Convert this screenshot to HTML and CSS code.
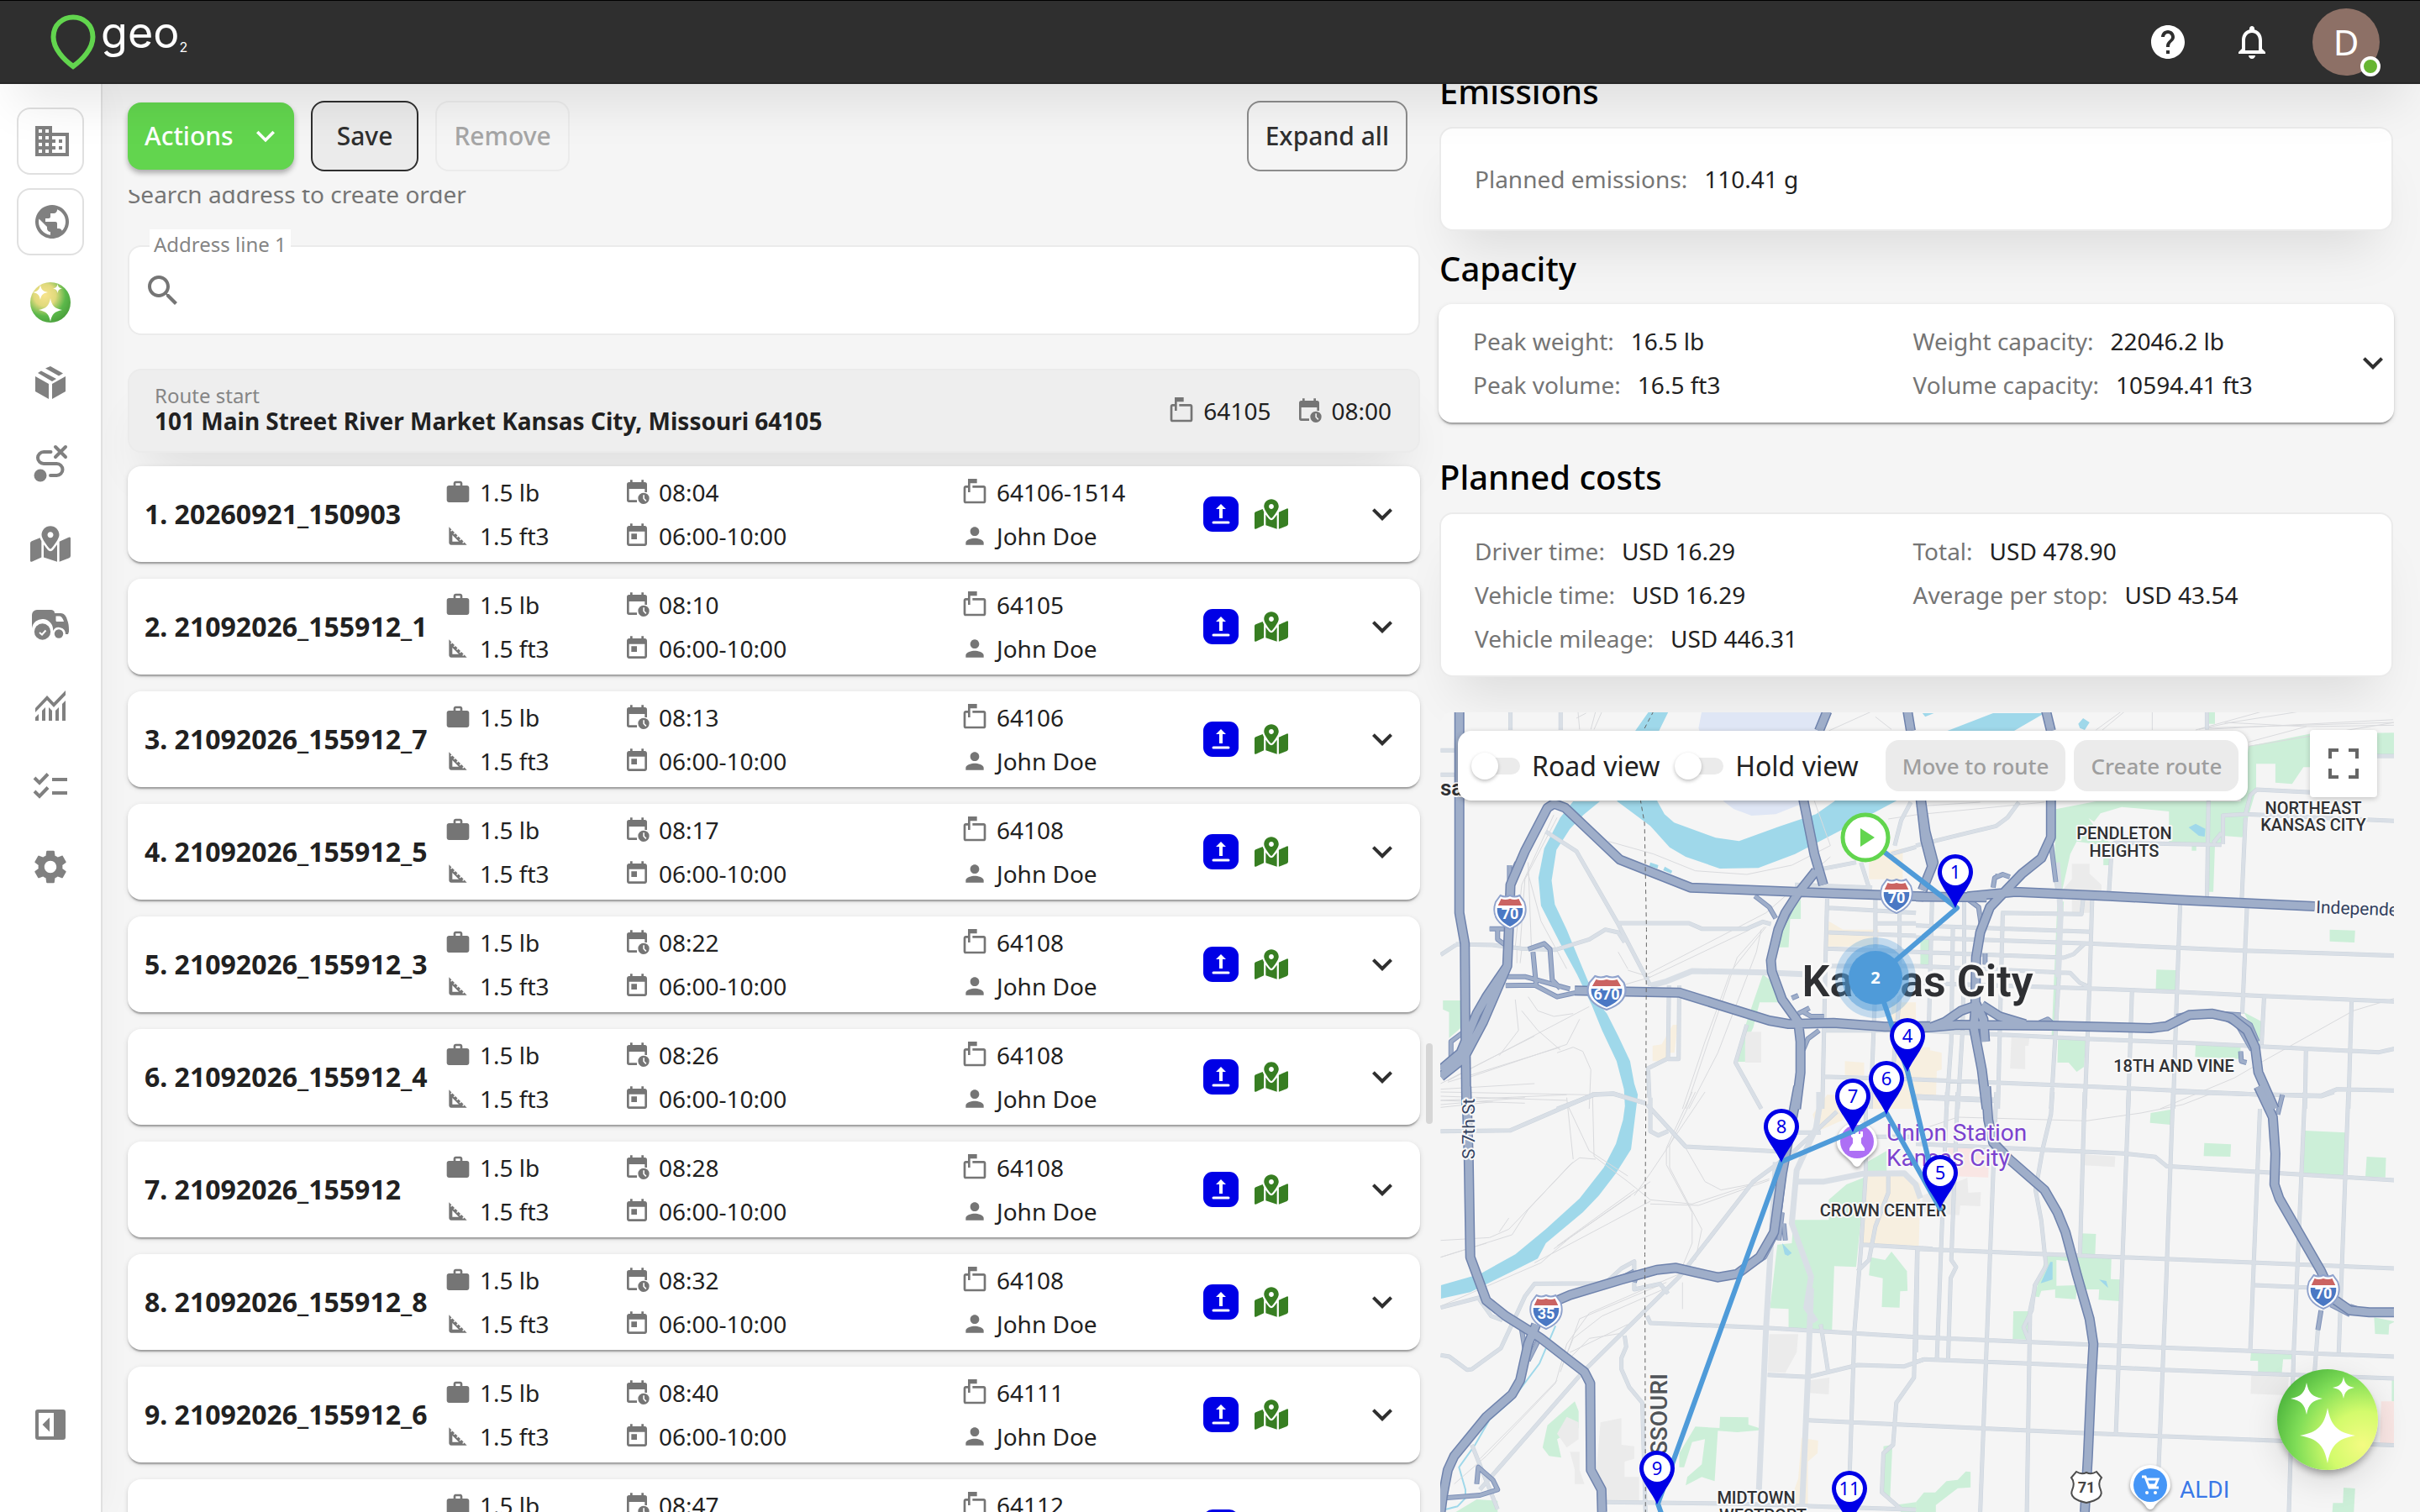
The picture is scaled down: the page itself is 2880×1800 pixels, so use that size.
FILE: index.html
```html
<!DOCTYPE html>
<html lang="en">
<head>
<meta charset="utf-8">
<meta name="viewport" content="width=device-width, initial-scale=1">
<title>geo2 – Route</title>
<link rel="stylesheet" href="styles.css">
</head>
<body>
<svg class="sprite" aria-hidden="true">
  <symbol id="i-chevron" viewBox="0 0 24 24"><path d="M16.59 8.59 12 13.17 7.41 8.59 6 10l6 6 6-6z"/></symbol>
  <symbol id="i-case" viewBox="0 0 24 24"><path d="M20 6h-4V4c0-1.11-.89-2-2-2h-4c-1.11 0-2 .89-2 2v2H4c-1.11 0-1.99.89-1.99 2L2 19c0 1.11.89 2 2 2h16c1.11 0 2-.89 2-2V8c0-1.11-.89-2-2-2zm-6 0h-4V4h4v2z"/></symbol>
  <symbol id="i-square" viewBox="0 0 24 24"><path d="M17.66 17.66l-1.06 1.06-.71-.71 1.06-1.06-1.94-1.94-1.06 1.06-.71-.71 1.06-1.06-1.94-1.94-1.06 1.06-.71-.71 1.06-1.06L9.7 9.7l-1.06 1.06-.71-.71 1.06-1.06-1.94-1.94-1.06 1.06-.71-.71 1.06-1.06L4 4v14c0 1.1.9 2 2 2h14l-2.34-2.34zM7 17v-5.76L12.76 17H7z"/></symbol>
  <symbol id="i-eta" viewBox="0 0 24 24"><path d="M19 3h-1V1h-2v2H8V1H6v2H5a2 2 0 0 0-2 2v14a2 2 0 0 0 2 2h7v-2H5V9h14v3h2V5a2 2 0 0 0-2-2z"/><path fill-rule="evenodd" d="M18 12.5a5 5 0 1 0 0 10 5 5 0 0 0 0-10zm-.5 2h1.2v2.9l1.9 1.9-.9.9-2.2-2.3z"/></symbol>
  <symbol id="i-window" viewBox="0 0 24 24"><path d="M19 3h-1V1h-2v2H8V1H6v2H5c-1.11 0-1.99.9-1.99 2L3 19c0 1.1.89 2 2 2h14c1.1 0 2-.9 2-2V5c0-1.1-.9-2-2-2zm0 16H5V8h14v11zM7 10h5v5H7z"/></symbol>
  <symbol id="i-mailbox" viewBox="0 0 24 24"><path d="M20 6H10v2h10v12H4V8h2v4h2V4h6V0H6v6H4c-1.1 0-2 .9-2 2v12c0 1.1.9 2 2 2h16c1.1 0 2-.9 2-2V8c0-1.1-.9-2-2-2z"/></symbol>
  <symbol id="i-person" viewBox="0 0 24 24"><path d="M12 12c2.21 0 4-1.79 4-4s-1.79-4-4-4-4 1.79-4 4 1.79 4 4 4zm0 2c-2.67 0-8 1.34-8 4v2h16v-2c0-2.66-5.33-4-8-4z"/></symbol>
  <symbol id="i-pickup" viewBox="0 0 42 42"><rect width="42" height="42" rx="11" fill="#0000e6"/><path d="M21 9l6 6h-4v11h-4V15h-4z" fill="#fff"/><path d="M12 31h18" stroke="#fff" stroke-width="3" stroke-linecap="round"/></symbol>
  <symbol id="i-map" viewBox="0 0 576 512"><path d="M288 0c-69.59 0-126 56.41-126 126 0 56.26 82.35 158.8 113.9 196.02 6.39 7.54 17.82 7.54 24.2 0C331.65 284.8 414 182.26 414 126 414 56.41 357.59 0 288 0zm0 168c-23.2 0-42-18.8-42-42s18.8-42 42-42 42 18.8 42 42-18.8 42-42 42zM20.12 215.95A32.006 32.006 0 0 0 0 245.66v250.32c0 11.32 11.43 19.06 21.94 14.86L160 448V214.92c-8.84-15.98-16.07-31.54-21.25-46.42L20.12 215.95zM288 359.67c-14.07 0-27.38-6.18-36.51-16.96-19.66-23.2-40.57-49.62-59.49-76.72v182l192 64V266c-18.92 27.09-39.82 53.52-59.49 76.72-9.13 10.77-22.44 16.95-36.51 16.95zm266.06-198.51L416 224v288l139.88-55.95A31.996 31.996 0 0 0 576 426.34V176.02c0-11.32-11.43-19.06-21.94-14.86z"/></symbol>
  <symbol id="i-star" viewBox="-32 -32 64 64"><path d="M0-32C4-11 11-4 32 0 11 4 4 11 0 32-4 11-11 4-32 0-11-4-4-11 0-32z" fill="#fff"/></symbol>
  <symbol id="shield" viewBox="0 0 42 44" preserveAspectRatio="none"><path d="M9 2q6 3 12 0 6 3 12 0l6 8c6 17-5 27-18 32C8 37-3 27 3 10z" fill="#fff" stroke="#8fa2cc" stroke-width="2"/><path d="M5 17h32c1 12-8 18-16 22C13 35 4 29 5 17z" fill="#4a78c4"/><path d="M10 6q5 2 11 0 6 2 11 0l4 8H6z" fill="#cb6462"/></symbol>
  <symbol id="pin" viewBox="0 0 42 64"><path d="M21 0a21 21 0 0 1 21 21c0 14-15 28-21 43C15 49 0 35 0 21A21 21 0 0 1 21 0z" fill="#0000e6"/><circle cx="21" cy="21" r="16" fill="#fff"/></symbol>
</svg>

<header class="topbar">
  <a class="logo" href="#" aria-label="geo2 home">
    <svg class="logo-pin" viewBox="0 0 54 66"><path d="M27 3.500C39 3.500 50.500 12 50.500 27 50.500 41 38 54 27 62 16 54 3.500 41 3.500 27 3.500 12 15 3.500 27 3.500z" fill="none" stroke="#62d54e" stroke-width="6"/></svg>
    <span class="logo-text">geo<small>2</small></span>
  </a>
  <nav class="topbar-tools" aria-label="Account">
    <button class="icon-btn" aria-label="Help"><svg viewBox="0 0 24 24"><path d="M12 2C6.480 2 2 6.480 2 12s4.480 10 10 10 10-4.480 10-10S17.520 2 12 2zm1 17h-2v-2h2v2zm2.070-7.750l-.9.92C13.450 12.900 13 13.500 13 15h-2v-.5c0-1.100.450-2.100 1.170-2.830l1.240-1.260c.370-.360.590-.860.590-1.410 0-1.100-.9-2-2-2s-2 .9-2 2H8c0-2.210 1.790-4 4-4s4 1.790 4 4c0 .88-.36 1.680-.93 2.250z"/></svg></button>
    <button class="icon-btn" aria-label="Notifications"><svg viewBox="0 0 24 24"><path d="M12 22c1.100 0 2-.9 2-2h-4c0 1.100.890 2 2 2zm6-6v-5c0-3.070-1.640-5.640-4.500-6.320V4c0-.83-.67-1.500-1.500-1.500s-1.500.67-1.500 1.500v.68C7.630 5.360 6 7.920 6 11v5l-2 2v1h16v-1l-2-2zm-2 1H8v-6c0-2.480 1.510-4.500 4-4.500s4 2.020 4 4.500v6z"/></svg></button>
    <button class="avatar" aria-label="Account D, online">D<span class="status"></span></button>
  </nav>
</header>

<div class="shell">
  <nav class="sidebar" aria-label="Main">
    <a class="side-link boxed" href="#" aria-label="Company"><svg viewBox="0 0 24 24"><path d="M12 7V3H2v18h20V7H12zM6 19H4v-2h2v2zm0-4H4v-2h2v2zm0-4H4V9h2v2zm0-4H4V5h2v2zm4 12H8v-2h2v2zm0-4H8v-2h2v2zm0-4H8V9h2v2zm0-4H8V5h2v2zm10 12h-8v-2h2v-2h-2v-2h2v-2h-2V9h8v10zm-2-8h-2v2h2v-2zm0 4h-2v2h2v-2z"/></svg></a>
    <a class="side-link boxed" href="#" aria-label="Region"><svg viewBox="0 0 24 24"><path d="M12 2C6.480 2 2 6.480 2 12s4.480 10 10 10 10-4.480 10-10S17.520 2 12 2zm-1 17.930c-3.950-.49-7-3.850-7-7.930 0-.62.080-1.210.210-1.790L9 15v1c0 1.100.9 2 2 2v1.930zm6.900-2.540c-.26-.81-1-1.390-1.900-1.390h-1v-3c0-.55-.45-1-1-1H8v-2h2c.55 0 1-.45 1-1V7h2c1.100 0 2-.9 2-2v-.41c2.930 1.190 5 4.060 5 7.410 0 2.080-.8 3.970-2.100 5.390z"/></svg></a>
    <a class="side-link" href="#" aria-label="Assistant"><svg viewBox="0 0 48 48"><defs><radialGradient id="ai-small" cx=".36" cy=".32" r=".72"><stop offset="0" stop-color="#f8e48e"/><stop offset=".38" stop-color="#e0d97c"/><stop offset=".72" stop-color="#5bb84a"/><stop offset="1" stop-color="#4ba03c"/></radialGradient></defs><circle cx="24" cy="24" r="24" fill="url(#ai-small)"/><use href="#i-star" x="10" y="19" width="28" height="28"/><use href="#i-star" x="3" y="3" width="18" height="18"/><use href="#i-star" x="27" y="2" width="11" height="11"/></svg></a>
    <a class="side-link" href="#" aria-label="Orders"><svg viewBox="0 0 48 48"><path d="M6 16l16 9v18L6 34zM42 16l-16 9v18l16-9zM9 12l4-2.500L31 19l-5 3zM18 6.500L24 4l15 8.500-5 3z"/></svg></a>
    <a class="side-link" href="#" aria-label="Unplanned routes"><svg viewBox="0 0 48 48"><g fill="none" stroke="#808080" stroke-width="4" stroke-linecap="round"><path d="M24.500 10H16a7 7 0 0 0 0 14h15.500a7 7 0 0 1 0 14H24M30 4l12 12M42 4L30 16"/></g><circle cx="12" cy="38" r="7.500"/></svg></a>
    <a class="side-link" href="#" aria-label="Map"><svg viewBox="0 0 48 48"><use href="#i-map" x="0" y="2" width="48" height="43"/></svg></a>
    <a class="side-link" href="#" aria-label="Fleet"><svg viewBox="0 0 48 48"><path d="M2 28V12a6 6 0 0 1 6-6h16c3 0 5 1 5 4h6c4 0 6 1 8 5l2 6c1 4 1 7 1 11l-1 3h-3a8 8 0 0 0-15-4A12 12 0 0 0 2 28z"/><path d="M30.500 13.500H35c2 0 4 3 5 6.500h-8c-1 0-1.500-.5-1.500-1.500z" fill="#fff"/><circle cx="14.500" cy="32" r="9.700"/><circle cx="34" cy="34.500" r="5.200"/><path d="M11 33l3 2.500 4.500-5" fill="none" stroke="#fff" stroke-width="2"/></svg></a>
    <a class="side-link" href="#" aria-label="Analytics"><svg viewBox="0 0 48 48"><path d="M6 27l14-15 8 8.500L42 6v5.500L28 26l-8-8.500L6 32zM6 38l4-4v8H6zM14 30l4-4v16h-4zM22 26l4 4v12h-4zM30 30l4-4v16h-4zM38 22l4-4v24h-4z"/></svg></a>
    <a class="side-link" href="#" aria-label="Tasks"><svg viewBox="0 0 48 48"><path d="M5 14l6 6L21 9.500M5 30l6 6 10-10.500M26 16h18M26 32h18" fill="none" stroke="#808080" stroke-width="4"/></svg></a>
    <a class="side-link" href="#" aria-label="Settings"><svg viewBox="0 0 24 24"><path d="M19.140 12.940c.040-.3.060-.61.060-.94 0-.32-.02-.64-.07-.94l2.030-1.580c.180-.14.230-.41.120-.61l-1.920-3.320c-.12-.22-.37-.29-.59-.22l-2.390.96c-.5-.38-1.030-.7-1.620-.94l-.36-2.540c-.04-.24-.24-.41-.48-.41h-3.840c-.24 0-.43.170-.47.410l-.36 2.540c-.59.240-1.130.570-1.620.940l-2.390-.96c-.22-.08-.47 0-.59.220L2.740 8.870c-.12.210-.08.470.120.610l2.030 1.580c-.05.3-.09.630-.09.940s.020.640.070.940l-2.030 1.580c-.18.140-.23.410-.12.610l1.920 3.320c.120.220.370.290.590.220l2.390-.96c.5.380 1.030.7 1.620.940l.36 2.540c.050.240.240.410.480.410h3.840c.24 0 .44-.17.470-.41l.36-2.540c.59-.24 1.130-.56 1.620-.94l2.390.96c.22.080.470 0 .59-.22l1.920-3.320c.12-.22.070-.47-.12-.61l-2.010-1.580zM12 15.600c-1.980 0-3.600-1.620-3.600-3.600s1.620-3.600 3.600-3.600 3.600 1.620 3.600 3.600-1.620 3.600-3.600 3.600z"/></svg></a>
    <button class="side-link collapse" aria-label="Expand sidebar"><svg viewBox="0 0 48 48"><path fill-rule="evenodd" d="M9 6h30a3 3 0 0 1 3 3v30a3 3 0 0 1-3 3H9a3 3 0 0 1-3-3V9a3 3 0 0 1 3-3zm1 4v28h18V10z"/><path d="M23 15.500v17L14.500 24z"/></svg></button>
  </nav>

  <main class="content">
    <section class="orders">
      <div class="toolbar">
        <button class="btn btn-primary">Actions<svg viewBox="0 0 24 24"><use href="#i-chevron"/></svg></button>
        <button class="btn btn-dark">Save</button>
        <button class="btn btn-muted" disabled>Remove</button>
        <button class="btn btn-expand">Expand all</button>
      </div>
      <div class="order-scroll">
        <p class="hint">Search address to create order</p>
        <div class="field">
          <label for="address">Address line 1</label>
          <svg viewBox="0 0 24 24"><path d="M15.500 14h-.79l-.28-.27C15.410 12.590 16 11.110 16 9.500 16 5.910 13.090 3 9.500 3S3 5.910 3 9.500 5.910 16 9.500 16c1.610 0 3.090-.59 4.230-1.570l.27.280v.79l5 4.990L20.490 19l-4.990-5zm-6 0C7.010 14 5 11.990 5 9.500S7.010 5 9.500 5 14 7.010 14 9.500 11.990 14 9.500 14z"/></svg>
          <input id="address" type="text">
        </div>
        <div class="route-start">
          <div class="start-place"><span>Route start</span><strong>101 Main Street River Market Kansas City, Missouri 64105</strong></div>
          <span class="fact"><svg><use href="#i-mailbox"/></svg>64105</span>
          <span class="fact"><svg><use href="#i-eta"/></svg>08:00</span>
        </div>
        <ol class="stops" id="stops"></ol>
      </div>
    </section>

    <section class="details">
      <h2>Emissions</h2>
      <div class="panel panel-tall"><dl><div><dt>Planned emissions:</dt><dd>110.41 g</dd></div></dl></div>
      <h2>Capacity</h2>
      <div class="panel panel-raised">
        <dl>
          <div><dt>Peak weight:</dt><dd>16.5 lb</dd></div><div><dt>Weight capacity:</dt><dd>22046.2 lb</dd></div>
          <div><dt>Peak volume:</dt><dd>16.5 ft3</dd></div><div><dt>Volume capacity:</dt><dd>10594.41 ft3</dd></div>
        </dl>
        <button class="expand" aria-label="Expand capacity"><svg><use href="#i-chevron"/></svg></button>
      </div>
      <h2>Planned costs</h2>
      <div class="panel">
        <dl>
          <div><dt>Driver time:</dt><dd>USD 16.29</dd></div><div><dt>Total:</dt><dd>USD 478.90</dd></div>
          <div><dt>Vehicle time:</dt><dd>USD 16.29</dd></div><div><dt>Average per stop:</dt><dd>USD 43.54</dd></div>
          <div><dt>Vehicle mileage:</dt><dd>USD 446.31</dd></div>
        </dl>
      </div>

      <div class="map">
        <svg class="map-canvas" viewBox="1714 848 1136 952" preserveAspectRatio="xMinYMin slice" role="img" aria-label="Route map of Kansas City">
          <defs>
            <g id="local-roads">
              <path d="M38 160H90M38 247H90M255 20V87M411 20V87M38 890L85 855M85 852L200 855 290 868 395 872 500 835 550 800 590 810 610 845M365 450L460 520 590 780 690 1000M590 777H810L850 797H990L1040 772 1065 780M748 1000L745 1260 683 1295 687 1400M780 1000L778 1262H745M1240 690L1235 900 1225 1440M1390 690V1000L1375 1440M1465 700V1040L1445 1300M1245 722L1516 740M1245 810L1516 822M1240 868L1516 880M1390 778H1516M1225 930H1516M1225 1160H1440M1225 1325L1516 1335M990 1140L955 1275 1035 1440M400 1440L515 1390 575 1387 675 1420M1195 590L1330 560M1440 530L1516 505M1450 500L1470 410 1500 345M1345 560L1370 650M1140 640L1380 650"/>
              <path transform="translate(1516 0)" d="M905 20V85M910 340L905 700M1025 400L1013 700M955 495V392L1025 388 1490 412M1025 388L1040 320 1060 300 1230 310M1430 180H1490M925 490L950 455M600 675L610 495 620 490 950 497M0 500L160 455 250 430 285 400 320 345M265 740L515 745 520 690M0 785L545 808M0 828L540 850 810 865 1020 875 1490 893M0 880L460 900 490 888 525 850M0 930L480 955 510 990 540 1005M0 990L540 1010 810 1022 1080 1037 1490 1057M548 695L540 1000 525 1440M822 705L810 1080 800 1440M1030 710L1015 1100M672 1020L660 1440M1083 1040L1075 1210M1355 1055L1345 1440M0 1160L530 1190 860 1205 1440 1238 1490 1225M1213 1230L1210 1440M0 1335L530 1360 1050 1388 1260 1393 1310 1370 1490 1375M150 700V920L145 1160 130 1440M115 790L110 1200 95 1440M270 740L255 1440M50 700L40 1160M0 1400L255 1412M435 620L450 720 445 960 420 1440"/>
              <path transform="translate(0 1380)" d="M38 140L255 137 515 8 575 5 675 40M690 20V140L715 155 745 140M680 45L800 195 1085 212M1105 240L1010 320 780 660 480 1000 160 1420M1270 70L1110 240M38 770L155 735 195 800 230 815M38 940L65 945 120 992 135 990 225 915 300 730 330 685 550 683 600 630 640 605V705L720 685 745 720M680 800L690 825 1050 842 1516 875M1430 300V360L1390 480 1370 600 1335 640M1360 0V290L1345 560 1325 850 1310 1360M1350 545L1568 560M1220 830L1243 1000M1055 1010L1180 1018 1335 975 1480 980 1540 955M1180 1172L1516 1190M1520 560L1510 1020 1455 1110 1445 1260 1415 1290 1410 1430 1470 1490M550 1465L950 1470 1516 1492M610 870L615 910 600 950V990L625 1055 665 1110 675 1500M135 1260L215 1490M1130 145H1220M1390 160H1516"/>
              <path transform="translate(1516 1380)" d="M0 15L255 28M0 185L650 220 745 232 780 265 1060 285 1490 315M0 560L640 590 1490 630M0 875L555 903 1040 925 1490 945M0 965L25 955 350 970 770 992 1050 1005 1490 1023M0 1190L520 1218 1490 1262M97 0L65 960M130 0L110 600 125 625 108 665 100 960M250 0L200 1500M425 0L420 80 395 200 372 350 390 460 400 570M370 700L355 780 345 1500M400 570L405 620 370 690 360 780 335 840 350 885M525 0L510 590M662 0L622 1220M800 0L778 690 755 1340M1070 60L1040 920M1210 0L1175 930 1160 1500M1345 0L1315 930M1055 690L1220 698M1250 850L1240 1000M805 0L1260 15 1300 0M5 560L0 930"/>
            </g>
            <g id="highways">
              <path d="M96 20V740L113 850 115 1170 118 1450M38 1300L100 1240 150 1100 180 1040 245 930 250 800 255 640 300 520 370 365 390 350 425 365 595 550 815 650 1240 670 1540 682M38 1325L110 1260 170 1130 245 930M455 1018L780 1025 1060 1125 1120 1137 1260 1133 1420 1147 1560 1145M1165 330L1200 530 1228 640M1240 20L1215 90M1490 20L1500 90M1530 330L1545 480 1565 570M1205 590L1150 670 1110 740 1088 800 1065 910 1068 950 1100 1050 1150 1130 1157 1200V1310L1143 1440"/>
              <path transform="translate(1516 0)" d="M0 682L220 685M160 682L310 665 600 680 840 695 1240 717M405 20L420 90M420 330V470L390 545 330 600 230 720 200 810 187 900 185 1060 210 1120 215 1200M15 330L30 450 55 560 20 660M20 1150L50 1148 130 1140 420 1143 730 1152 780 1145 850 1105 920 1100 980 1115 1030 1160 1055 1220 1065 1310 1115 1440M50 1148L90 1130 140 1090 185 1072M205 1070L260 1110 340 1138M185 1080L180 1150 205 1300 220 1440"/>
              <path transform="translate(0 1380)" d="M118 -20L125 240 130 590 180 745 240 800 310 850 350 880 485 1000 503 1040 505 1350 538 1420 540 1500M340 800L400 745 440 725 600 670 710 635 770 628 900 662 960 650 1030 590 1075 500 1100 290 1150 -20M335 830L310 900 285 1030 260 1080 180 1160 80 1300 60 1350 45 1440 38 1500"/>
              <path transform="translate(1516 1380)" d="M218 -20L225 100 240 180 290 240 400 350 440 430 465 500 500 650 540 810 552 900 545 1040 535 1300 525 1500M1065 -20L1110 90 1118 220 1115 330 1130 380 1190 500 1260 640 1300 740 1350 780 1410 787 1500 787"/>
            </g>
            <g id="ramps">
              <path d="M190 797H245M215 800V835L245 860M310 870L360 850 378 870 385 980 410 1010M325 880L335 1000M245 968H300L440 1012M240 1000L330 998 400 1040 460 1025M70 1260V1200L110 1165M1015 680L1060 720 1080 760M1215 1160L1180 1190 1165 1230M1130 1045L1150 1035M1150 1100L1185 1080M1160 1090L1190 1110H1230M252 570V620L275 560M1065 900L1095 800 1130 720"/>
              <path transform="translate(1516 0)" d="M240 650L245 615 270 603 292 612M255 600V610M160 690L195 720 205 800M200 810L210 760M418 470L435 630M215 885V925M1010 1235L1012 1270 1028 1275M1000 1110L1040 1140 1062 1200M950 1110L1000 1140 1045 1230M215 1080L210 1200M810 1110L880 1095 1010 1105M380 1135L410 1120 430 1140"/>
              <path transform="translate(0 1380)" d="M50 1450L160 1440 215 1420 200 1385 155 1340 150 1400M140 1210L105 1270M290 850L300 920M345 880L310 960M590 670L640 640M650 640L640 680M1100 430L1090 530M1110 530L1105 470M960 650L1045 590 1085 500 1105 300"/>
              <path transform="translate(1516 1380)" d="M1140 10L1125 80M1260 780L1250 850M1290 760L1350 795M1350 765L1400 785"/>
            </g>
          </defs>

          <g class="surface" transform="translate(1700 840) scale(.382653 .333333)">
            <g class="park">
              <path d="M45 1053H102V1150L64 1187V1095L45 1085zM1158 692V762H1125L1120 863H1090L1095 800 1135 720zM1040 960L1085 1000 1090 1060H1030L1010 1150 985 1210V1272H958L975 1180 1010 1060zM1530 830H1558V925H1530z"/>
              <path transform="translate(1516 0)" d="M1035 145L1230 100 1490 97V175L1230 180V220H1205L1170 280 1118 275V208H1058V300L1015 470 955 465 950 490 930 500 925 665H905V495H560L500 485 480 530 455 660H440L430 620 435 370 560 342H1010zM905 20H930V65H905zM1287 800L1366 803 1364 846 1287 842zM748 943L810 945 808 1018 746 1015zM870 1210L1010 1218 1008 1262 868 1255zM1020 1095L1078 1130 1070 1210zM442 1188L528 1192 523 1290 500 1308 475 1275H440zM440 700H460L440 1180H422zM583 530H603V570H583zM858 500H872V518H858z"/>
              <path transform="translate(0 1380)" d="M1135 457H1345L1330 625 1262 622 1255 852 1120 845V775L1062 772 1085 545 1130 540zM1245 385L1300 330 1355 305 1350 457H1245zM1375 590L1420 600 1440 570 1488 640 1490 710 1467 712 1465 770 1410 768 1413 665 1370 655zM370 1190L455 1105 467 1140V1200L400 1240 413 1306 375 1300 355 1270zM907 1160L995 1162V1188L1028 1200V1208L960 1215 900 1210 890 1390 850 1375 800 1405 805 1375 850 1330 860 1240 820 1250 795 1340H780V1290L830 1195 905 1200zM85 1500L150 1455 215 1460V1500zM1415 1265L1443 1260 1435 1465 1415 1440zM1450 1475L1516 1465V1500H1470zM1365 250L1425 210V285H1365z"/>
              <path transform="translate(1516 1380)" d="M730 75L795 62 793 117 728 110zM897 182L980 187 978 231 895 229zM1210 138L1336 145 1332 298 1205 293zM1402 231L1462 235 1460 305 1398 302zM514 505L560 507 557 590 608 595 606 668 638 670 635 747 568 742 570 705H500L497 740 433 735V705L390 710 383 733 368 730 405 585H510zM303 783H360L355 885 301 882zM1042 930L1175 935 1172 955H1142L1138 1003 1064 1000V960H1040zM0 1465L25 1430H60L95 1390 130 1385 155 1355 170 1357V1412L130 1415 62 1475V1500H0zM1330 1413L1366 1416 1362 1500H1295L1297 1468H1328zM1425 805L1490 820 1472 830 1470 866 1428 864zM1480 1030H1490V1105H1480z"/>
            </g>
            <path class="land" d="M2053 402L2070 415 2090 385 2156 362 2303 378V487H2116L2070 430zM1953 1980L2006 1985 2016 2070 1953 2072z"/>
            <path class="shops" d="M1370 530L1475 510V620H1370zM1245 770L1290 800H1400V860H1240zM1440 1060H1516V1130H1440zM1440 1220H1560V1400H1450zM760 1140H775L765 1240H740V1270H697V1215L725 1210zM1295 1270L1355 1275V1320H1295zM1240 1390H1290V1480L1210 1520 1195 1460zM1536 1225L1596 1240V1300L1581 1305 1578 1410H1516V1340H1546zM1360 1680H1500L1530 1710 1525 1930 1350 1920zM1160 2615L1212 2625 1210 2670 1180 2700V2860H1120L1150 2760zM1370 1380H1516V1440H1370z"/>
            <path class="industry" d="M985 1165H1035V1275H985zM2001 565H2056V600L2093 640V660H1971L2001 620zM2001 680H2065V740H2001zM1813 1185L1869 1187 1866 1215H1856V1298L1809 1296zM1060 2245H1150L1145 2310 1110 2383 1055 2380zM535 2560L600 2545V2640L640 2645V2690L610 2700V2755H655V2845H550V2800L520 2760zM1185 2410L1247 2400 1245 2460 1183 2455zM440 2665L470 2665V2730L485 2780H455V2730zM400 2600L430 2540 467 2560V2620L430 2650zM2041 1603L2136 1610 2134 1648 2039 1642zM2559 2390L2676 2395 2671 2463 2557 2458zM1536 1750L1676 1687 1679 1740 1718 1737 1716 1788 1654 1785 1651 1820 1536 1810z"/>
            <path class="hospital" d="M1616 1580H1744L1741 1685 1616 1680zM2963 2485H3006V2637L2959 2635z"/>
            <path class="airport" d="M850 20H1250L1215 90 1180 342 1080 388 1005 393 950 370 918 342 840 80z"/>
            <path class="river" d="M686 20H747L700 130 690 230 712 342 734 388 764 418 893 472 966 484 1092 431 1205 388 1262 342 1400 180 1621 87 1756 27H1916L1826 87 1600 240 1452 342 1300 435 1140 530 1026 580 906 582 800 540 750 506 690 430 587 342 580 180 645 87zM450 342H533L482 390 440 440 398 515 383 625 393 710 430 800 480 940 520 1050 555 1100 590 1180 627 1270 640 1350 651 1390 650 1400 630 1585 583 1670 530 1750 480 1810 365 1920 340 1975 270 2015 130 2095 39 2118V2070L160 2030 270 1960 365 1870 470 1760 545 1650 583 1565 605 1480 611 1430 608 1370 585 1270 540 1160 508 1070 462 960 410 850 350 715 342 615 360 510 410 400zM690 560L715 570 712 582 687 573zM735 575L758 590 755 600 730 588zM2364 435L2386 422 2416 440 2414 468 2396 465zM2021 65L2036 45 2056 60 2041 87 2026 80zM1536 27H1572L1545 40zM1934 1987H1941V2050L1904 2063zM2086 2050L2108 2055 2114 2080zM1100 1920L1130 1955 1118 1965 1108 1960z"/>
            <path class="creek" d="M395 2215L345 2350 260 2480 190 2550 145 2640 95 2720 115 2800V2830L90 2860 40 2875"/>

            <g class="rail">
              <path d="M560 485L700 530 830 590 990 603 1130 570 1250 500 1200 340M680 960L1050 740 1250 540M680 975L1000 800M620 945L690 970 600 1000M270 860L290 640 390 390M285 860L300 620 400 400M310 560L320 860M310 600L350 770 430 940M275 860V920M290 870L285 920M60 1340L500 1075M38 1380L500 1390M38 1395L430 1410M38 1410L300 1420M38 1350L330 1180M38 1370L330 1350M60 1345L410 1220M290 1090L340 1160 410 1230M470 1120L430 1210 120 1330M270 1050L280 1160 220 1250M310 1040L340 1090 390 1110 450 1100M500 1440L505 1300 480 1235 450 1220 400 1240M1050 790L940 950 860 1200 790 1440M1045 790L960 900 870 1200 800 1440M1035 800L1020 880 900 1240 810 1440M465 20L470 85M520 20L505 85M490 27L460 45M540 20L515 85M1245 90L1380 20M1390 40L1440 85M1430 405L1516 390M590 880L620 940"/>
              <path transform="translate(1516 0)" d="M0 360L200 345M0 390L400 345M560 87L640 20M580 87L650 20M735 20V87M870 87L1080 20M900 85L1490 50M900 80L1490 60M960 60L1215 75 1490 70M1035 130L1215 75M1035 145L1490 60M880 85L980 60 1200 20M760 1440L990 1330 1080 1270 1360 1090 1490 1045"/>
              <path transform="translate(0 1380)" d="M38 30L430 10M38 45L300 20M38 55L200 35M430 20L450 240M510 0L515 230 620 320 690 385 820 400 1060 310M430 40L500 210 620 300M450 250L250 490 190 520 38 530M520 240L470 235 440 260 310 420 260 510 38 590M250 450L220 500M820 0L740 200V260L820 430V540L780 650M830 0L750 190V270L850 490 830 600M860 0L690 290 640 370M800 200L860 320 910 350 1000 330M690 320L440 520 350 610 38 765M630 370L390 560M640 350L400 550M690 390L560 470 330 610M690 400L840 405 1060 315M780 650L500 790 430 900 395 1040 180 1300 80 1400M740 680L470 810 410 1000M740 700L540 800 450 880 415 980M620 830L440 930M610 860L500 880 440 950M38 590L180 540M790 680V775M400 1030L290 1160 160 1310"/>
              <path transform="translate(1516 1380)" d="M0 140L130 90 530 103 700 75 830 45 920 5"/>
            </g>
            <use href="#local-roads" class="road-edge"/>
            <use href="#local-roads" class="road-fill"/>
            <path class="avenue" d="M690 1000L740 985 820 948 1050 953 1225 962M1215 1380V1440L1205 1510 1145 1660 1130 1850 1190 2040 1175 2150 1205 2200M1080 1630L1050 2220 1040 2480 1027 2820M1140 1700L1230 1700 1350 1672 1480 1670 1515 1710 1530 1760M1190 2080L1180 2400 1162 2860M1955 560L1966 740 1958 970"/>
            <use href="#ramps" class="ramp-edge"/>
            <use href="#ramps" class="ramp-fill"/>
            <use href="#highways" class="hw-edge"/>
            <use href="#highways" class="hw-fill"/>
            <path class="state-line" d="M700 20L668 90 660 342 672 420 678 800 676 1440 673 1960 675 2880"/>
          </g>

          <g class="area-label">
            <text x="2753" y="969">NORTHEAST</text><text x="2753" y="989">KANSAS CITY</text>
            <text x="2528" y="999">PENDLETON</text><text x="2528" y="1020">HEIGHTS</text>
            <text x="2587" y="1276">18TH AND VINE</text>
            <text x="2241" y="1448">CROWN CENTER</text>
            <text x="2090" y="1790">MIDTOWN</text><text x="2098" y="1811">WESTPORT</text>
          </g>
          <text class="city-label" x="2282" y="1186">Kansas City</text>
          <text class="town-label" x="1714" y="947">sa</text>
          <text class="road-label" transform="translate(1755 1380) rotate(-90)">S 7th St</text>
          <text class="road-label" transform="translate(2756 1087) rotate(2)">Independence</text>
          <text class="state-label" transform="translate(1984 1635) rotate(-90)">MISSOURI</text>
          <g class="place-label">
            <text x="2245" y="1358">Union Station</text><text x="2245" y="1388">Kansas City</text>
            <text class="shop" x="2594" y="1783">ALDI</text>
          </g>

          <g class="poi">
            <path class="poi-drop" d="M2210 1336a24 24 0 0 1 24 24c0 13-15 17-20 27q-4 4-8 0c-5-10-20-14-20-27a24 24 0 0 1 24-24z"/>
            <circle cx="2210" cy="1359" r="20" fill="#ad6ff5"/>
            <path d="M2203 1347h3v3h2v-3h4v3h2v-3h3v6l-2 2v6l4 6v3h-18v-3l4-6v-6l-2-2z" fill="#fff"/>
            <path class="poi-drop" d="M2559 1744a24 24 0 0 1 24 24c0 13-15 17-20 27q-4 4-8 0c-5-10-20-14-20-27a24 24 0 0 1 24-24z"/>
            <circle cx="2559" cy="1768" r="20" fill="#4596f7"/>
            <path d="M2549 1758h4l5 13h11M2554 1761h14l-3 7h-9" fill="none" stroke="#fff" stroke-width="3"/><circle cx="2555" cy="1777" r="2" fill="#fff"/><circle cx="2565" cy="1777" r="2" fill="#fff"/>
          </g>

          <g class="shields">
            <use href="#shield" x="1777" y="1064" width="40" height="44"/><text x="1797" y="1094">70</text>
            <use href="#shield" x="2237" y="1045" width="40" height="44"/><text x="2257" y="1075">70</text>
            <use href="#shield" x="1888" y="1160" width="48" height="44"/><text x="1912" y="1190">670</text>
            <use href="#shield" x="1820" y="1540" width="40" height="44"/><text x="1840" y="1570">35</text>
            <use href="#shield" x="2745" y="1516" width="40" height="44"/><text x="2765" y="1546">70</text>
            <path d="M2471 1752q6 4 12 1 6 3 12-1l6 7q-5 6-1 15c3 8-4 12-17 15-13-3-20-7-17-15q4-9-1-15z" fill="#fff" stroke="#4d4d4d" stroke-width="2"/><text class="us" x="2483" y="1777">71</text>
          </g>

          <path class="route" d="M2220 997L2329 1081 2232 1164 2270 1275 2309 1439 2245 1325 2205 1347 2120 1383 1973 1790 1980 1810"/>

          <g class="stops-layer">
            <circle cx="2220" cy="997" r="27" fill="#fff" stroke="#62d54e" stroke-width="5"/><path d="M2214 986l17 11-17 11z" fill="#62d54e"/>
            <circle cx="2232" cy="1164" r="48" fill="#4f9bd9" opacity=".3"/><circle cx="2232" cy="1164" r="40" fill="#4f9bd9" opacity=".5"/><circle cx="2232" cy="1164" r="32" fill="#4f9bd9"/>
            <text class="cluster" x="2232" y="1171">2</text>
            <use href="#pin" x="2306" y="1017" width="42" height="64"/><text x="2327" y="1046">1</text>
            <use href="#pin" x="2249" y="1212" width="42" height="64"/><text x="2270" y="1241">4</text>
            <use href="#pin" x="2184" y="1284" width="42" height="64"/><text x="2205" y="1313">7</text>
            <use href="#pin" x="2224" y="1263" width="42" height="64"/><text x="2245" y="1292">6</text>
            <use href="#pin" x="2099" y="1320" width="42" height="64"/><text x="2120" y="1349">8</text>
            <use href="#pin" x="2288" y="1375" width="42" height="64"/><text x="2309" y="1404">5</text>
            <use href="#pin" x="1951" y="1727" width="42" height="64"/><text x="1972" y="1756">9</text>
            <use href="#pin" x="2180" y="1751" width="42" height="64"/><text x="2201" y="1780">11</text>
          </g>
        </svg>
        <div class="map-bar">
          <label class="switch"><input type="checkbox">Road view</label>
          <label class="switch"><input type="checkbox">Hold view</label>
          <div class="map-actions"><button disabled>Move to route</button><button disabled>Create route</button></div>
        </div>
        <button class="fullscreen" aria-label="Full screen"><svg viewBox="0 0 36 36"><path d="M2 12V2h10M24 2h10v10M34 24v10H24M12 34H2V24" fill="none" stroke="#666" stroke-width="4"/></svg></button>
      </div>
    </section>
    <div class="splitter" role="separator" aria-label="Resize panes"></div>
  </main>
</div>

<button class="fab" aria-label="Open assistant"><svg viewBox="0 0 120 120"><defs><radialGradient id="ai-big" cx=".85" cy=".75" r=".95"><stop offset="0" stop-color="#f4fb82"/><stop offset=".35" stop-color="#d3fb6c"/><stop offset=".7" stop-color="#7fdd57"/><stop offset="1" stop-color="#4bb33c"/></radialGradient></defs><circle cx="60" cy="60" r="60" fill="url(#ai-big)"/><use href="#i-star" x="27" y="46" width="66" height="66"/><use href="#i-star" x="16" y="16" width="38" height="38"/><use href="#i-star" x="66" y="9" width="26" height="26"/></svg></button>
<script src="stops.js"></script>
</body>
</html>
```
FILE: stops.js
```js
const stops = [
  ["20260921_150903", "08:04", "64106-1514"],
  ["21092026_155912_1", "08:10", "64105"],
  ["21092026_155912_7", "08:13", "64106"],
  ["21092026_155912_5", "08:17", "64108"],
  ["21092026_155912_3", "08:22", "64108"],
  ["21092026_155912_4", "08:26", "64108"],
  ["21092026_155912", "08:28", "64108"],
  ["21092026_155912_8", "08:32", "64108"],
  ["21092026_155912_6", "08:40", "64111"],
  ["21092026_155912_2", "08:47", "64112"]
];

const fact = (icon, text) =>
  `<span class="fact"><svg><use href="#i-${icon}"/></svg>${text}</span>`;

document.getElementById("stops").innerHTML = stops.map(([id, eta, zip], i) => `
  <li class="stop">
    <h3>${i + 1}. ${id}</h3>
    <div>${fact("case", "1.5 lb")}${fact("square", "1.5 ft3")}</div>
    <div>${fact("eta", eta)}${fact("window", "06:00-10:00")}</div>
    <div>${fact("mailbox", zip)}${fact("person", "John Doe")}</div>
    <div class="stop-actions">
      <svg class="pickup"><use href="#i-pickup"/></svg>
      <svg class="located"><use href="#i-map"/></svg>
      <button class="expand" aria-label="Expand stop ${i + 1}"><svg><use href="#i-chevron"/></svg></button>
    </div>
  </li>`).join("");
```
FILE: styles.css
```css
* { box-sizing: border-box; }

:root {
  --text: #212121;
  --muted: #757575;
  --line: #e0e0e0;
  --soft-shadow: 0 40px 60px -20px rgba(0, 0, 0, .1);
  --raised: 0 4px 2px -2px rgba(0, 0, 0, .2), 0 2px 2px rgba(0, 0, 0, .14), 0 2px 6px rgba(0, 0, 0, .12);
}

body {
  margin: 0;
  height: 100vh;
  display: flex;
  flex-direction: column;
  overflow: hidden;
  background: #f5f5f5;
  color: var(--text);
  font: 28px/40px "Noto Sans", "Open Sans", sans-serif;
}

h2, h3, p, dl, dd, ol { margin: 0; padding: 0; }
button { font: inherit; color: inherit; border: 0; background: none; padding: 0; cursor: pointer; }
button:disabled { cursor: default; }
svg { display: block; flex: none; fill: currentColor; }
.sprite { position: absolute; width: 0; height: 0; }

/* Top bar */
.topbar {
  position: relative;
  z-index: 10;
  flex: none;
  height: 100px;
  padding: 0 48px 0 60px;
  display: flex;
  align-items: center;
  justify-content: space-between;
  background: #2f2f2f;
  border-top: 1px solid #000;
  border-bottom: 2px solid #272727;
  box-shadow: var(--soft-shadow);
  color: #fff;
}
.logo { display: flex; align-items: center; gap: 6px; color: #fff; text-decoration: none; }
.logo-pin { width: 54px; height: 66px; }
.logo-text { font: 52px/56px Inter, sans-serif; margin-bottom: 4px; }
.logo-text small { font-size: 16px; vertical-align: -5px; }
.topbar-tools { display: flex; align-items: center; gap: 52px; }
.icon-btn svg { width: 48px; height: 48px; }
.avatar {
  position: relative;
  width: 80px;
  height: 80px;
  border-radius: 50%;
  background: #8d7066;
  font-size: 42px;
  line-height: 80px;
  margin-left: -4px;
}
.status {
  position: absolute;
  right: -1px;
  bottom: -1px;
  width: 24px;
  height: 24px;
  border-radius: 50%;
  border: 4px solid #fff;
  background: #67b532;
}

/* Shell */
.shell { flex: 1; min-height: 0; display: flex; }
.sidebar {
  flex: none;
  width: 122px;
  padding: 28px 20px 64px;
  display: flex;
  flex-direction: column;
  gap: 16px;
  background: #fff;
  border-right: 2px solid var(--line);
  color: #808080;
  box-shadow: 0 0 40px rgba(0, 0, 0, .04);
}
.side-link { width: 80px; height: 80px; display: grid; place-items: center; color: #808080; }
.side-link svg { width: 48px; height: 48px; }
.boxed { border: 2px solid var(--line); border-radius: 16px; padding-left: 4px; }
.collapse { margin-top: auto; }

.content {
  position: relative;
  flex: 1;
  min-width: 0;
  padding: 0 30px;
  display: grid;
  grid-template-columns: minmax(0, 1538fr) minmax(0, 1138fr);
  gap: 22px;
  overflow: hidden;
}
.splitter {
  position: absolute;
  left: calc(57.4% - 8px);
  top: 1142px;
  width: 8px;
  height: 96px;
  border-radius: 4px;
  background: #d6d6d6;
}

/* Orders pane */
.orders { min-height: 0; display: flex; flex-direction: column; }
.toolbar { display: flex; align-items: center; gap: 20px; padding: 20px 15px 22px 0; }
.btn { height: 84px; border: 2px solid; border-radius: 16px; font-size: 30px; font-weight: 500; }
.btn-primary {
  height: 80px;
  display: flex;
  align-items: center;
  gap: 16px;
  padding: 0 12px 0 20px;
  border: 0;
  background: #62d54e;
  color: #fff;
  box-shadow: 0 4px 6px rgba(0, 0, 0, .3);
}
.btn-primary svg { width: 44px; height: 44px; }
.btn-dark { padding: 0 29px; border-color: #2f2f2f; background: #ebebeb; color: #2f2f2f; }
.btn-muted { padding: 0 20px; border-color: #ebebeb; color: #a6a6a6; }
.btn-expand { margin-left: auto; padding: 0 20px; border-color: #8c8c8c; color: #2f2f2f; }

.order-scroll { flex: 1; min-height: 0; margin: 0 -30px; padding: 0 30px; overflow: hidden; }
.hint { margin-top: -15px; color: var(--muted); }
.field {
  position: relative;
  margin: 41px 0 40px;
  height: 107px;
  display: flex;
  align-items: center;
  padding-left: 16px;
  background: #fff;
  border: 2px solid #ebebeb;
  border-radius: 16px;
  color: var(--muted);
}
.field label {
  position: absolute;
  left: 24px;
  top: -21px;
  padding: 0 5px;
  background: #fff;
  font-size: 24px;
  line-height: 36px;
  color: #858585;
}
.field svg { width: 48px; height: 48px; }
.field input { flex: 1; min-width: 0; align-self: stretch; border: 0; outline: 0; background: none; font: inherit; padding: 0 12px; }

.route-start {
  display: flex;
  align-items: center;
  gap: 30px;
  min-height: 100px;
  margin-bottom: 16px;
  padding: 0 32px 0 30px;
  background: #eee;
  border: 2px solid #ebebeb;
  border-radius: 16px;
  box-shadow: var(--soft-shadow);
}
.start-place { flex: 1; min-width: 0; display: flex; flex-direction: column; padding-bottom: 4px; }
.start-place span { font-size: 24px; line-height: 28px; color: #858585; }
.start-place strong { font-weight: 700; line-height: 32px; }
.fact { display: flex; align-items: center; gap: 10px; line-height: 52px; }
.fact svg { width: 32px; height: 32px; color: var(--muted); }

.stops { position: relative; list-style: none; display: grid; gap: 20px; }
.stop {
  display: grid;
  grid-template-columns: minmax(0, 357fr) minmax(0, 213fr) minmax(0, 402fr) minmax(0, 288fr) minmax(0, 237fr);
  align-items: center;
  padding: 5px 21px 5px 20px;
  background: #fff;
  border-radius: 16px;
  box-shadow: var(--raised);
}
.stop h3 { font-size: 32px; font-weight: 700; white-space: nowrap; }
.stop-actions { display: flex; align-items: center; }
.pickup { width: 42px; height: 42px; margin-right: 19px; }
.located { width: 40px; height: 36px; color: #377e22; }
.expand { margin-left: auto; color: #2f2f2f; }
.expand svg { width: 48px; height: 48px; }

/* Details pane */
.details { min-height: 0; display: flex; flex-direction: column; margin-top: -19px; padding-right: 1px; }
.details h2 { font-size: 40px; font-weight: 500; line-height: 56px; margin: 0 0 14px 1px; color: #000; }
.panel {
  flex: none;
  display: flex;
  align-items: center;
  margin: 0 1px 42px;
  padding: 18px 48px 18px 40px;
  background: #fff;
  border: 2px solid #ebebeb;
  border-radius: 16px;
  box-shadow: var(--soft-shadow);
}
.panel-tall { padding-top: 34px; padding-bottom: 34px; margin-bottom: 17px; }
.panel-raised { margin: 0 0 37px; padding: 18px 1px 19px 41px; border: 0; box-shadow: var(--raised); }
.panel dl { flex: 1; display: grid; grid-template-columns: minmax(0, 1fr) minmax(0, 1fr); }
.panel dl div { display: flex; gap: 20px; line-height: 52px; white-space: nowrap; }
.panel dt { color: var(--muted); }

/* Map */
.map { position: relative; flex: 1; min-height: 0; margin-left: 2px; overflow: hidden; background: #f5f5f5; border-radius: 14px 14px 0 0; }
.map-canvas { width: 100%; height: 100%; }
.surface path, .map-canvas defs path { vector-effect: non-scaling-stroke; }
.park { fill: #ccefd8; }
.land { fill: #f5f5f5; }
.shops { fill: #f7efe0; }
.industry { fill: #ebebeb; }
.hospital { fill: #f9e6e4; }
.airport { fill: #dfe6f5; }
.river { fill: #9fd8ea; }
.creek { fill: none; stroke: #9fd8ea; stroke-width: 2px; }
.rail { fill: none; stroke: #d9dadd; stroke-width: 1px; }
.road-edge, .road-fill, .avenue, .ramp-edge, .ramp-fill, .hw-edge, .hw-fill { fill: none; stroke-linejoin: round; }
.road-edge { stroke: #cbd3dc; stroke-width: 5px; }
.road-fill { stroke: #d9dfe6; stroke-width: 4px; }
.avenue { stroke: #d9dfe6; stroke-width: 7px; }
.ramp-edge { stroke: #7d90b8; stroke-width: 6px; }
.ramp-fill { stroke: #9faec9; stroke-width: 4px; }
.hw-edge { stroke: #6f83ad; stroke-width: 12px; }
.hw-fill { stroke: #9faec9; stroke-width: 9px; }
.state-line { fill: none; stroke: #666; stroke-width: 1px; stroke-dasharray: 5 4; }
.map-canvas text { font-family: Roboto, sans-serif; font-weight: 500; stroke: #f8f8f8; stroke-width: 4px; paint-order: stroke; stroke-linejoin: round; }
.area-label text { font-size: 20px; text-anchor: middle; fill: #2f3033; }
.map-canvas .city-label { font-size: 52px; font-weight: 600; text-anchor: middle; fill: #2f3033; stroke-width: 6px; }
.map-canvas .town-label { font-size: 26px; font-weight: 600; fill: #2f3033; }
.map-canvas .road-label { font-size: 21px; font-weight: 400; fill: #33415f; }
.map-canvas .state-label { font-size: 28px; text-anchor: end; fill: #505458; }
.place-label text { font-size: 28px; fill: #7b42cf; }
.place-label .shop { fill: #3b78e7; }
.map-canvas .place-label text { font-weight: 400; }
.poi-drop { fill: #fff; filter: drop-shadow(0 2px 2px rgba(0, 0, 0, .4)); }
.map-canvas .shields text { font-size: 18px; font-weight: 700; text-anchor: middle; fill: #fff; stroke: none; }
.map-canvas .shields .us { fill: #444; }
.route { fill: none; stroke: #4f9bd9; stroke-width: 6px; stroke-linejoin: round; }
.map-canvas .stops-layer text { font-family: "Noto Sans", sans-serif; font-size: 22px; font-weight: 400; text-anchor: middle; fill: #0000e6; stroke: none; }
.map-canvas .stops-layer .cluster { font-weight: 700; fill: #fff; font-size: 20px; }

.map-bar {
  position: absolute;
  left: 21px;
  top: 22px;
  height: 83px;
  padding: 0 11px 0 16px;
  display: flex;
  align-items: center;
  gap: 18px;
  background: #fff;
  border-radius: 16px;
  box-shadow: 0 2px 6px rgba(0, 0, 0, .3);
}
.switch { display: flex; align-items: center; gap: 14px; font-size: 32px; white-space: nowrap; }
.switch input {
  appearance: none;
  position: relative;
  width: 58px;
  height: 20px;
  margin: 0;
  border-radius: 10px;
  background: #ebebeb;
}
.switch input::before {
  content: "";
  position: absolute;
  left: 0;
  top: -6px;
  width: 32px;
  height: 32px;
  border-radius: 50%;
  background: #fff;
  box-shadow: 0 2px 4px rgba(0, 0, 0, .25);
}
.map-actions { display: flex; gap: 10px; margin-left: 14px; }
.map-actions button { height: 61px; padding: 0 20px; border-radius: 16px; background: #ebebeb; color: #9e9e9e; font-size: 26px; font-weight: 500; white-space: nowrap; }
.fullscreen {
  position: absolute;
  right: 20px;
  top: 21px;
  width: 80px;
  height: 80px;
  display: grid;
  place-items: center;
  border-radius: 4px;
  background: #fff;
  box-shadow: 0 2px 6px rgba(0, 0, 0, .2);
}
.fullscreen svg { width: 36px; height: 36px; }

.fab {
  position: fixed;
  z-index: 20;
  right: 50px;
  bottom: 50px;
  width: 120px;
  height: 120px;
  border-radius: 50%;
  box-shadow: 0 6px 10px -2px rgba(0, 0, 0, .35), 0 12px 40px rgba(0, 0, 0, .12);
}
.fab svg { width: 120px; height: 120px; }
```
